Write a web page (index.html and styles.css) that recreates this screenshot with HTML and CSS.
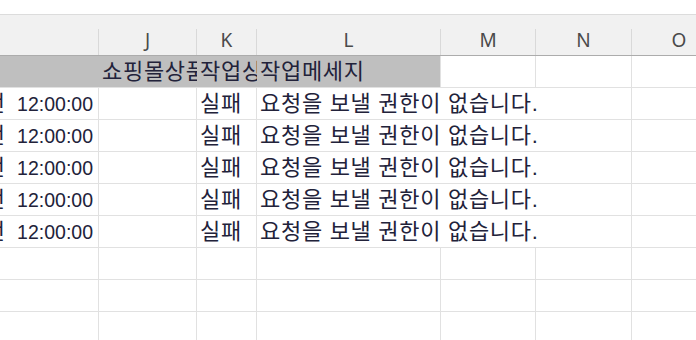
FILE: index.html
```html
<!DOCTYPE html>
<html>
<head>
<meta charset="utf-8">
<title>시트</title>
<link rel="stylesheet" href="styles.css">
</head>
<body>
    <div class="sheet">
        <div class="colhead">
            <div class="hc"></div>
            <div class="hc">J</div>
            <div class="hc">K</div>
            <div class="hc">L</div>
            <div class="hc">M</div>
            <div class="hc">N</div>
            <div class="hc">O</div>
        </div>
        <div class="row first">
            <div class="c fill"></div>
            <div class="c fill ko">쇼핑몰상품명</div>
            <div class="c fill ko">작업상태</div>
            <div class="c fill ko">작업메세지</div>
            <div class="c"></div>
            <div class="c"></div>
            <div class="c"></div>
        </div>
        <div class="row">
            <div class="c time"><span>2024-05-01 <span class="ko">오전</span> 12:00:00</span></div>
            <div class="c"></div>
            <div class="c ko">실패</div>
            <div class="c wide ko">요청을 보낼 권한이 없습니다.</div>
            <div class="c"></div>
        </div>
        <div class="row">
            <div class="c time"><span>2024-05-01 <span class="ko">오전</span> 12:00:00</span></div>
            <div class="c"></div>
            <div class="c ko">실패</div>
            <div class="c wide ko">요청을 보낼 권한이 없습니다.</div>
            <div class="c"></div>
        </div>
        <div class="row">
            <div class="c time"><span>2024-05-01 <span class="ko">오전</span> 12:00:00</span></div>
            <div class="c"></div>
            <div class="c ko">실패</div>
            <div class="c wide ko">요청을 보낼 권한이 없습니다.</div>
            <div class="c"></div>
        </div>
        <div class="row">
            <div class="c time"><span>2024-05-01 <span class="ko">오전</span> 12:00:00</span></div>
            <div class="c"></div>
            <div class="c ko">실패</div>
            <div class="c wide ko">요청을 보낼 권한이 없습니다.</div>
            <div class="c"></div>
        </div>
        <div class="row">
            <div class="c time"><span>2024-05-01 <span class="ko">오전</span> 12:00:00</span></div>
            <div class="c"></div>
            <div class="c ko">실패</div>
            <div class="c wide ko">요청을 보낼 권한이 없습니다.</div>
            <div class="c"></div>
        </div>
        <div class="row">
            <div class="c"></div><div class="c"></div><div class="c"></div><div class="c"></div><div class="c"></div><div class="c"></div><div class="c"></div>
        </div>
        <div class="row">
            <div class="c"></div><div class="c"></div><div class="c"></div><div class="c"></div><div class="c"></div><div class="c"></div><div class="c"></div>
        </div>
        <div class="row">
            <div class="c"></div><div class="c"></div><div class="c"></div><div class="c"></div><div class="c"></div><div class="c"></div><div class="c"></div>
        </div>
    </div>
</body>
</html>
```

FILE: styles.css
```css
*{
    box-sizing: border-box;
}
body{
    margin:0;
    background:white;
    overflow:hidden;
    font-family: 'Liberation Sans', 'Noto Sans CJK KR', sans-serif;
}
.sheet{
    padding-top:14px;
    width:727px;
}
.colhead, .row{
    display:grid;
    grid-template-columns: 99px 98px 60px 184px 95px 96px 95px;
}
.colhead{
    background:#f1f1f1;
    border-top:1px solid #dcdcdc;
    border-bottom:1px solid #acacac;
    padding-top:14px;
}
.hc{
    height:26px;
    border-right:1px solid #d9d9d9;
    display:flex;
    justify-content:center;
    align-items:center;
    padding-bottom:4px;
    font-family: 'Noto Sans', sans-serif;
    font-size:19px;
    color:#4a4a4a;
}
.row{
    height:32px;
}
.c{
    border-right:1px solid #e1e1e1;
    border-bottom:1px solid #e1e1e1;
    display:flex;
    align-items:center;
    padding:0 3px;
    font-size:19.5px;
    line-height:1;
    color:#22223a;
    white-space:nowrap;
    overflow:hidden;
}
.ko{
    font-size:22px;
    letter-spacing:0.7px;
}
.fill{
    background:#bfbfbf;
    border-right:none;
}
.fill:nth-child(4){
    border-right:1px solid #e1e1e1;
}
.time{
    justify-content:flex-end;
    padding-right:5px;
}
.time .ko{
    margin-right:6px;
}
.wide{
    grid-column: span 3;
}
```
